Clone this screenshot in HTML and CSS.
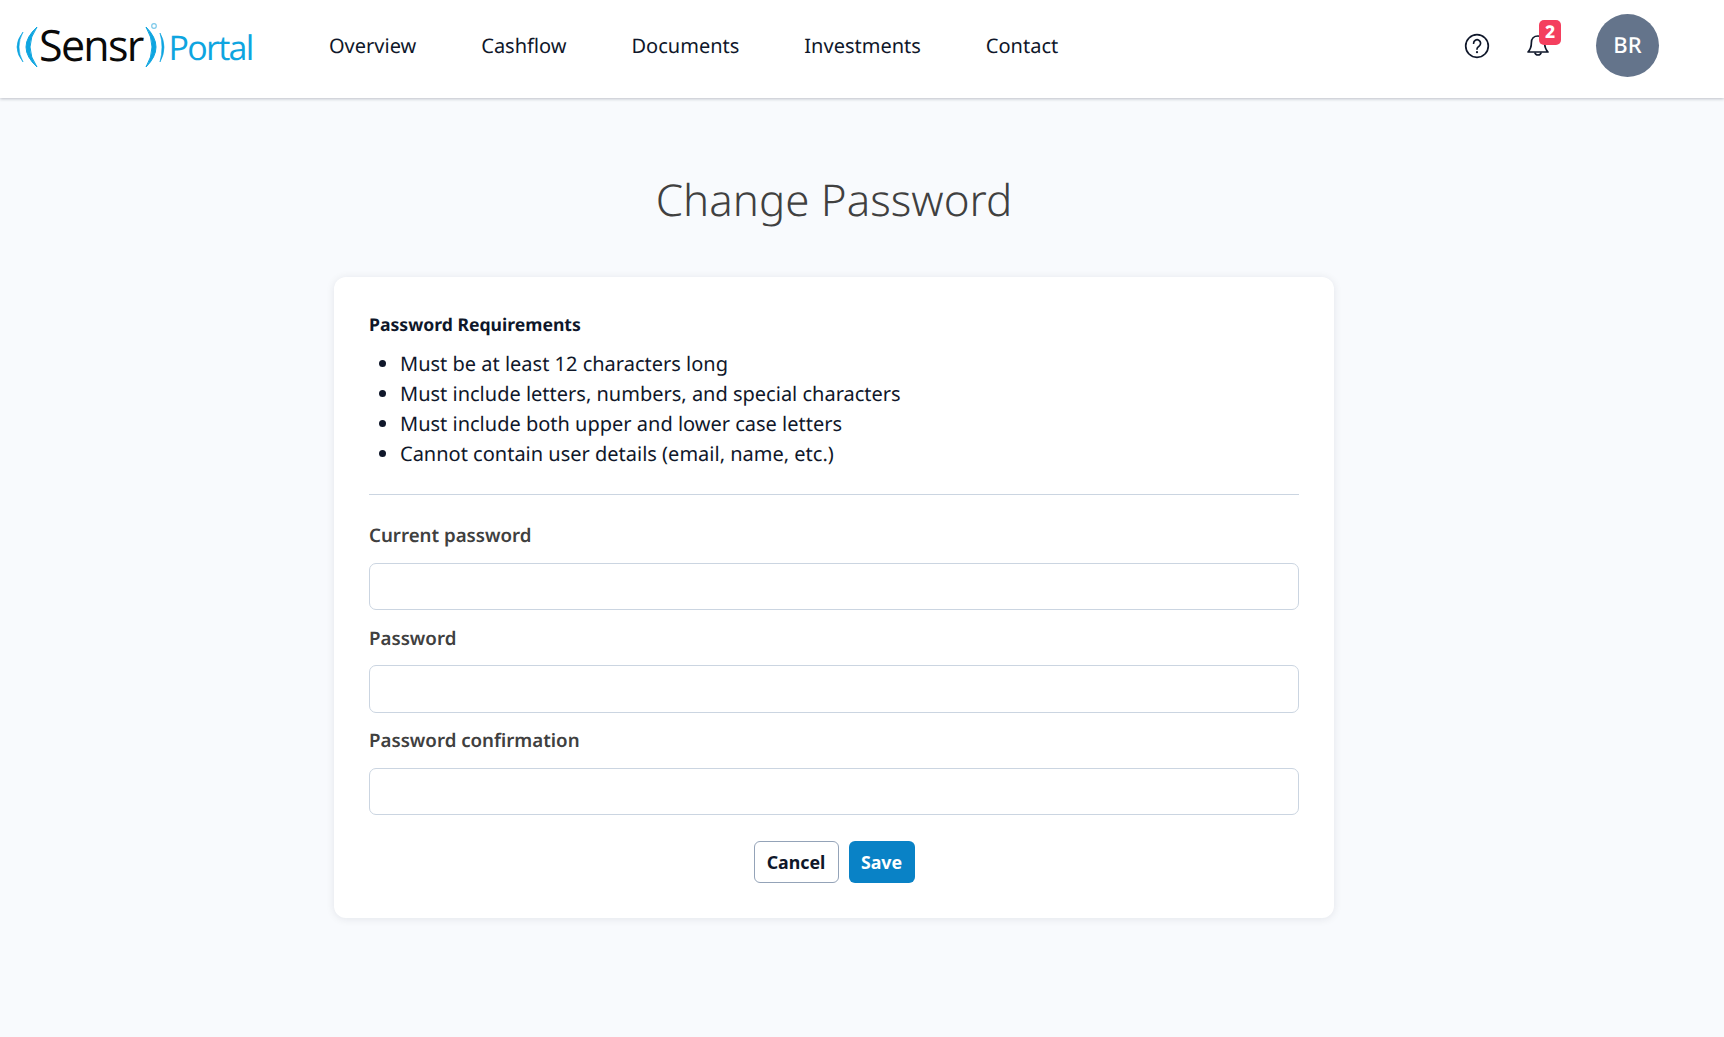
FILE: index.html
```html
<!DOCTYPE html>
<html lang="en">
<head>
<meta charset="utf-8">
<title>Change Password</title>
<link rel="stylesheet" href="styles.css">
</head>
<body>
<header class="topbar">
  <a class="logo" href="#">
    <svg class="logo-arcs logo-arcs-left" width="23" height="50" viewBox="16 22 23 50" aria-hidden="true">
      <path d="M23 32Q11 47 23 62Q15 47 23 32Z" fill="#0ea5e0" stroke="#0ea5e0" stroke-width=".6"/>
      <path d="M37 27Q15 47 37 67Q23 47 37 27Z" fill="#0ea5e0" stroke="#0ea5e0" stroke-width="1"/>
    </svg>
    <span class="logo-name">Sensr</span>
    <svg class="logo-arcs logo-arcs-right" width="28" height="50" viewBox="143 22 28 50" aria-hidden="true">
      <path d="M146 27Q166 47 146 67Q158 47 146 27Z" fill="#0ea5e0" stroke="#0ea5e0" stroke-width="1"/>
      <path d="M160 33Q168 47 160 62Q164 47 160 33Z" fill="#0ea5e0" stroke="#0ea5e0" stroke-width=".6"/>
      <circle cx="154" cy="26" r="2.300" fill="none" stroke="#7cc9ea" stroke-width="1.200"/>
    </svg>
    <span class="logo-sub">Portal</span>
  </a>
  <nav class="nav">
    <a href="#">Overview</a>
    <a href="#">Cashflow</a>
    <a href="#">Documents</a>
    <a href="#">Investments</a>
    <a href="#">Contact</a>
  </nav>
  <div class="actions">
    <svg class="icon-help" width="26" height="26" viewBox="0 0 26 26" aria-hidden="true">
      <circle cx="13" cy="13" r="11.300" fill="none" stroke="#0f172a" stroke-width="1.700"/>
      <path d="M9.600 10.200a3.500 3.500 0 1 1 5.400 3c-1.300.8-2 1.400-2 2.900" fill="none" stroke="#0f172a" stroke-width="1.700" stroke-linecap="round"/>
      <circle cx="13" cy="19.200" r="1.100" fill="#0f172a"/>
    </svg>
    <div class="bell">
      <svg width="26" height="26" viewBox="0 0 26 26" aria-hidden="true">
        <path d="M13 3c-4.200 0-6.600 3-6.600 6.600 0 5-1.200 7.200-3.400 9.400h20c-2.200-2.200-3.400-4.400-3.400-9.400C19.600 6 17.200 3 13 3z" fill="none" stroke="#0f172a" stroke-width="1.700" stroke-linejoin="round"/>
        <path d="M9.800 19.500a3.300 3.300 0 0 0 6.400 0" fill="none" stroke="#0f172a" stroke-width="1.700"/>
      </svg>
      <span class="badge">2</span>
    </div>
    <div class="avatar">BR</div>
  </div>
</header>
<main class="main">
  <h1 class="title">Change Password</h1>
  <form class="card">
    <h2 class="req-title">Password Requirements</h2>
    <ul class="req-list">
      <li>Must be at least 12 characters long</li>
      <li>Must include letters, numbers, and special characters</li>
      <li>Must include both upper and lower case letters</li>
      <li>Cannot contain user details (email, name, etc.)</li>
    </ul>
    <hr class="divider">
    <div class="field">
      <label for="current">Current password</label>
      <input id="current" type="password">
    </div>
    <div class="field">
      <label for="password">Password</label>
      <input id="password" type="password">
    </div>
    <div class="field">
      <label for="confirm">Password confirmation</label>
      <input id="confirm" type="password">
    </div>
    <div class="buttons">
      <button type="button" class="btn btn-cancel">Cancel</button>
      <button type="button" class="btn btn-save">Save</button>
    </div>
  </form>
</main>
</body>
</html>
```
FILE: styles.css
```css
* { box-sizing: border-box; }
html, body { margin: 0; height: 100%; }
body {
  background: #f8fafd;
  font-family: "Noto Sans", sans-serif;
  color: #0f172a;
  height: 1037px;
  overflow: hidden;
  text-rendering: geometricPrecision;
}
.topbar {
  display: flex;
  align-items: center;
  height: 98px;
  background: #fff;
  box-shadow: 0 1px 3px rgba(15, 23, 42, .25);
  padding-left: 16px;
}
.logo {
  display: flex;
  align-items: flex-start;
  width: 313px;
  height: 98px;
  text-decoration: none;
}
.logo-arcs { flex: none; margin-top: 22px; }
.logo-name {
  flex: none;
  width: 104px;
  margin-top: 23px;
  font-family: "Open Sans", sans-serif;
  font-size: 43px;
  font-weight: 500;
  line-height: 1;
  letter-spacing: -1.700px;
  color: #0a0a0a;
}
.logo-sub {
  margin-top: 29.500px;
  margin-left: -2.500px;
  font-family: "Open Sans", sans-serif;
  font-size: 34px;
  line-height: 1;
  letter-spacing: -1.700px;
  color: #0ea5e0;
}
.nav { display: flex; gap: 65px; margin-top: -7px; }
.nav a {
  color: #0f172a;
  font-size: 20px;
  text-decoration: none;
}
.actions {
  display: flex;
  align-items: center;
  margin-left: auto;
  margin-right: 65px;
  margin-top: -7px;
}
.icon-help { margin-right: 35px; }
.bell { position: relative; width: 26px; height: 26px; margin-right: 45.500px; }
.badge {
  position: absolute;
  top: -13px;
  left: 14.500px;
  width: 22px;
  height: 25px;
  background: #f43f5e;
  border-radius: 5px;
  color: #fff;
  font-size: 17.500px;
  font-weight: 800;
  line-height: 24px;
  text-align: center;
}
.avatar {
  width: 63px;
  height: 63px;
  border-radius: 50%;
  background: #64748b;
  color: #fff;
  font-size: 22px;
  font-weight: 500;
  line-height: 62px;
  text-align: center;
}
.main { width: 1668px; display: flex; flex-direction: column; align-items: center; }
.title {
  margin: 68px 0 45px;
  font-size: 43.900px;
  font-weight: 300;
  line-height: 66px;
  color: #404040;
}
.card {
  width: 1000px;
  padding: 35px;
  background: #fff;
  border-radius: 12px;
  box-shadow: 0 1px 8px rgba(15, 23, 42, .09);
}
.req-title { margin: 0; font-size: 17.600px; font-weight: 700; line-height: 26px; }
.req-list { margin: 11.400px 0 0; padding-left: 31px; font-size: 20px; line-height: 30px; }
.divider { border: 0; border-top: 1px solid #cbd5e1; margin: 24.200px 0 26.800px; }
.field { margin-bottom: 13.300px; }
.field label {
  display: block;
  font-size: 18.700px;
  font-weight: 600;
  line-height: 29px;
  color: #404040;
  margin-bottom: 12.500px;
}
.field input {
  display: block;
  width: 100%;
  height: 47.600px;
  border: 1px solid #cbd5e1;
  border-radius: 7px;
  background: #fff;
}
.buttons { display: flex; justify-content: center; gap: 10px; margin-top: 25.300px; }
.btn {
  height: 42.700px;
  border-radius: 6px;
  font-family: "Noto Sans", sans-serif;
  font-size: 17.800px;
  font-weight: 700;
  padding: 0;
}
.btn-cancel { width: 85px; background: #fff; border: 1px solid #94a3b8; color: #0f172a; }
.btn-save { width: 66px; background: #0982c6; border: 0; color: #fff; }
```
